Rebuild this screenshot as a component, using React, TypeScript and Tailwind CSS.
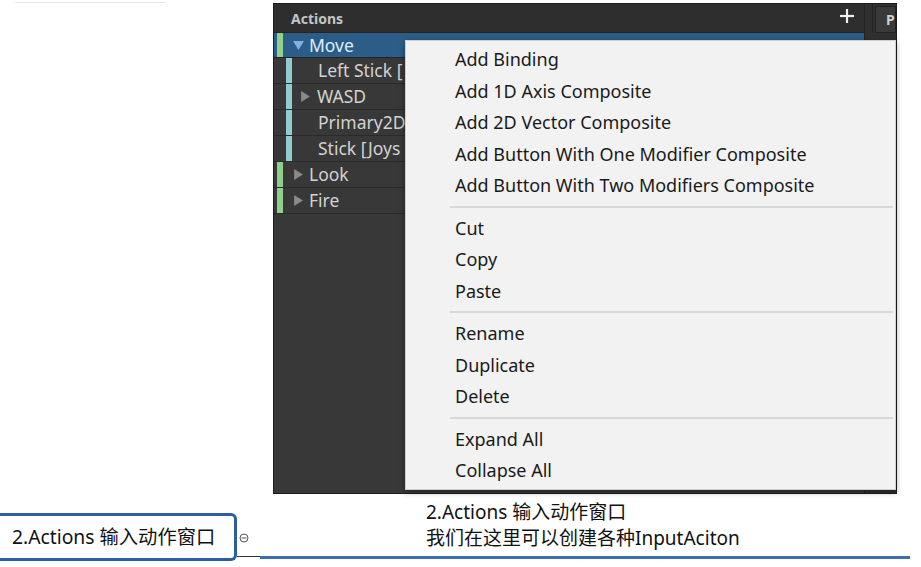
import React from 'react';

const rows = [
  { label: 'Left Stick [', depth: 1, arrow: false },
  { label: 'WASD', depth: 1, arrow: true },
  { label: 'Primary2D', depth: 1, arrow: false },
  { label: 'Stick [Joys', depth: 1, arrow: false },
  { label: 'Look', depth: 0, arrow: true },
  { label: 'Fire', depth: 0, arrow: true },
];

const menuGroups = [
  [
    'Add Binding',
    'Add 1D Axis Composite',
    'Add 2D Vector Composite',
    'Add Button With One Modifier Composite',
    'Add Button With Two Modifiers Composite',
  ],
  ['Cut', 'Copy', 'Paste'],
  ['Rename', 'Duplicate', 'Delete'],
  ['Expand All', 'Collapse All'],
];

const Arrow = ({ down }: { down?: boolean }) => (
  <svg width="11" height="11" viewBox="0 0 10 10" className="shrink-0">
    {down ? (
      <polygon points="0,1 10,1 5,9" fill="#7fb2e0" />
    ) : (
      <polygon points="1,0 9,5 1,10" fill="#8a8a8a" />
    )}
  </svg>
);

export default function App() {
  return (
    <div
      className="relative w-[921px] h-[567px] bg-white overflow-hidden"
      style={{ fontFamily: '"Noto Sans", "Noto Sans CJK SC", sans-serif' }}
    >
      {/* faint line top-left */}
      <div className="absolute left-[15px] top-[2px] w-[150px] h-px bg-[#e6e6e6]" />

      {/* Actions panel */}
      <div className="ml-[273px] mt-[3px] w-[624px] h-[491px] bg-[#1c1c1c] p-px flex">
        <div className="w-[590px] flex flex-col bg-[#383838]">
          <div className="h-[29px] shrink-0 bg-[#2e2e2e] flex items-center justify-between pl-[17px] pr-[10px] border-b border-[#232323]">
            <span className="text-[14px] font-bold text-[#c4c4c4]">Actions</span>
            <svg width="14" height="14" viewBox="0 0 14 14" className="-mt-[4px]">
              <line x1="7" y1="0" x2="7" y2="14" stroke="#f0f0f0" strokeWidth="2.2" />
              <line x1="0" y1="7" x2="14" y2="7" stroke="#f0f0f0" strokeWidth="2.2" />
            </svg>
          </div>
          <div className="h-[25px] flex items-center bg-[#2c5d88] border-b border-[#232323]">
            <div className="ml-[3px] w-[6px] self-stretch bg-[#8fd18c]" />
            <div className="ml-[10px] mr-[5px]">
              <Arrow down />
            </div>
            <span className="text-[17.5px] text-[#dcefff]">Move</span>
          </div>
          {rows.map((r) => (
            <div key={r.label} className="h-[26px] flex items-center border-b border-[#2a2a2a]">
              {r.depth === 1 ? (
                <div className="ml-[12px] w-[6px] self-stretch bg-[#8fcdd1]" />
              ) : (
                <div className="ml-[3px] w-[6px] self-stretch bg-[#8fd18c]" />
              )}
              {r.arrow ? (
                <div className={r.depth === 1 ? 'ml-[8px] mr-[6px]' : 'ml-[10px] mr-[5px]'}>
                  <Arrow />
                </div>
              ) : (
                <div className="ml-[26px]" />
              )}
              <span className="text-[17.5px] text-[#d2d2d2]">{r.label}</span>
            </div>
          ))}
          <div className="flex-1" />
        </div>
        <div className="w-px bg-[#232323]" />
        <div className="flex-1 bg-[#303030] flex flex-col">
          <div className="h-[29px] flex">
            <div className="w-[8px] border-r border-[#222]" />
            <div className="flex-1 ml-[2px] mt-[2px] bg-[#3a3a3a] border border-[#222] flex items-center pl-[10px] text-[14px] font-bold text-[#d0d0d0]">
              P
            </div>
          </div>
        </div>
      </div>

      {/* Context menu */}
      <div className="absolute left-[405px] top-[40px] w-[491px] h-[450px] bg-[#f2f2f2] border border-[#d0d0d0] shadow-[0_2px_6px_rgba(0,0,0,0.4)] pt-[3px]">
        {menuGroups.map((group, gi) => (
          <div key={gi}>
            {gi > 0 && <div className="ml-[44px] mr-[2px] mt-[4px] mb-[5px] h-[2px] bg-[#d8d8d8]" />}
            {group.map((item) => (
              <div key={item} className="h-[31.5px] flex items-center pl-[49px] text-[18px] text-[#1a1a1a]">
                {item}
              </div>
            ))}
          </div>
        ))}
      </div>

      {/* bottom captions */}
      <div className="flex">
        <div className="w-[260px] h-[71px] flex items-end">
          <div className="w-[237px] h-[48px] mb-[4px] border-[3px] border-l-0 border-[#2e5ca6] rounded-r-[6px] flex items-center pl-[12px] text-[19.3px] text-[#111]">
            2.Actions 输入动作窗口
          </div>
          <div className="flex flex-col h-full">
            <div className="flex-1 flex items-end pb-[13px] pl-[2px]">
              <svg width="10" height="10" viewBox="0 0 10 10">
                <circle cx="5" cy="5" r="4" fill="none" stroke="#555" strokeWidth="1" />
                <line x1="2.5" y1="5" x2="7.5" y2="5" stroke="#555" strokeWidth="1" />
              </svg>
            </div>
            <div className="h-px w-[23px] mb-[8px] bg-[#333]" />
          </div>
        </div>
        <div className="w-[650px] h-[65px] border-b-[3px] border-[#3f6db3] pl-[166px] pt-[5px] text-[19px] leading-[26px] text-[#111]">
          <div>2.Actions 输入动作窗口</div>
          <div>我们在这里可以创建各种InputAciton</div>
        </div>
      </div>
    </div>
  );
}
